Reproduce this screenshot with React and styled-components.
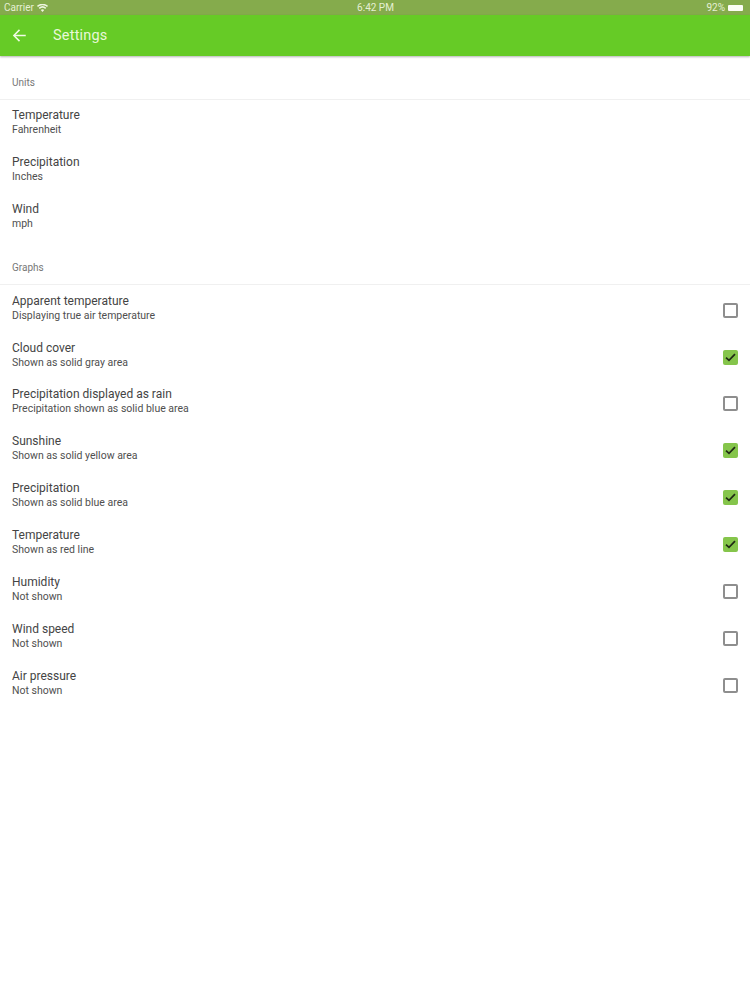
import styled, { createGlobalStyle } from 'styled-components';

const GlobalStyle = createGlobalStyle`
  html, body {
    margin: 0;
    padding: 0;
    background: #fff;
    font-family: Roboto, "Liberation Sans", sans-serif;
  }
`;

const Page = styled.div`
  width: 750px;
  height: 1000px;
  overflow: hidden;
  background: #fff;
`;

const StatusBar = styled.div`
  height: 15px;
  background: #85ab4c;
  color: #e6f0d4;
  font-size: 10px;
  display: grid;
  grid-template-columns: 1fr auto 1fr;
  align-items: center;
  padding: 0 7px 0 4px;
`;

const StatusLeft = styled.div`
  display: flex;
  align-items: center;
  gap: 3px;
`;

const StatusTime = styled.span`
  padding-left: 4px;
`;

const StatusRight = styled.div`
  display: flex;
  align-items: center;
  justify-content: flex-end;
  gap: 3px;
`;

const Battery = styled.span`
  display: block;
  width: 15px;
  height: 6px;
  background: #fbfdf5;
  border-radius: 1px;
`;

const AppBar = styled.header`
  height: 41px;
  background: #66cb26;
  color: #e9f8d8;
  display: flex;
  align-items: center;
  padding-left: 12px;
  box-shadow: 0 1px 2px rgba(0, 0, 0, 0.3);
`;

const BackButton = styled.svg`
  width: 15px;
  height: 15px;
  margin-right: 26px;
`;

const Title = styled.h1`
  margin: 0;
  font-size: 14.5px;
  font-weight: 400;
  letter-spacing: 0.2px;
`;

const SectionHeader = styled.div`
  height: ${props => props.$height}px;
  box-sizing: border-box;
  padding: 0 12px 11px;
  display: flex;
  align-items: flex-end;
  border-bottom: 1px solid #f0f0f0;
  color: #777;
  font-size: 10px;
`;

const List = styled.div`
  padding-top: ${props => props.$top}px;
`;

const Row = styled.div`
  height: 46.875px;
  box-sizing: border-box;
  padding: 0 12px;
  display: flex;
  align-items: flex-start;
  justify-content: space-between;
`;

const RowText = styled.div`
  display: flex;
  flex-direction: column;
`;

const RowTitle = styled.span`
  font-size: 12px;
  line-height: 15px;
  color: #444;
`;

const RowSub = styled.span`
  font-size: 10.5px;
  line-height: 14px;
  color: #4f4f4f;
`;

const Check = styled.span`
  width: 15px;
  height: 15px;
  box-sizing: border-box;
  margin-top: 9px;
  border-radius: 2px;
  border: ${props => (props.$on ? 'none' : '2px solid #8e8e8e')};
  background: ${props => (props.$on ? '#85c54b' : '#fff')};
  display: flex;
  align-items: center;
  justify-content: center;
`;

const units = [
  ['Temperature', 'Fahrenheit'],
  ['Precipitation', 'Inches'],
  ['Wind', 'mph'],
];

const graphs = [
  ['Apparent temperature', 'Displaying true air temperature', false],
  ['Cloud cover', 'Shown as solid gray area', true],
  ['Precipitation displayed as rain', 'Precipitation shown as solid blue area', false],
  ['Sunshine', 'Shown as solid yellow area', true],
  ['Precipitation', 'Shown as solid blue area', true],
  ['Temperature', 'Shown as red line', true],
  ['Humidity', 'Not shown', false],
  ['Wind speed', 'Not shown', false],
  ['Air pressure', 'Not shown', false],
];

const App = () => (
  <>
    <GlobalStyle />
    <Page>
      <StatusBar>
        <StatusLeft>
          <span>Carrier</span>
          <svg width="11" height="8" viewBox="0 0 22 16" fill="#eef5e0">
            <path d="M11 16 7.6 12.2a5 5 0 0 1 6.8 0L11 16Z" />
            <path d="M5.6 10 3.4 7.6a11.4 11.4 0 0 1 15.2 0L16.4 10a8.2 8.2 0 0 0-10.8 0Z" />
            <path d="M1.8 5.8 0 3.6a16.6 16.6 0 0 1 22 0l-1.8 2.2a13.8 13.8 0 0 0-18.4 0Z" />
          </svg>
        </StatusLeft>
        <StatusTime>6:42 PM</StatusTime>
        <StatusRight>
          <span>92%</span>
          <Battery />
        </StatusRight>
      </StatusBar>
      <AppBar>
        <BackButton viewBox="0 0 24 24" fill="none" stroke="#f2fbe6" strokeWidth="2.4">
          <path d="M22 12H3" />
          <path d="M12 3l-9 9 9 9" />
        </BackButton>
        <Title>Settings</Title>
      </AppBar>
      <SectionHeader $height={44}>Units</SectionHeader>
      <List $top={8}>
        {units.map(([title, sub]) => (
          <Row key={title}>
            <RowText>
              <RowTitle>{title}</RowTitle>
              <RowSub>{sub}</RowSub>
            </RowText>
          </Row>
        ))}
      </List>
      <SectionHeader $height={36}>Graphs</SectionHeader>
      <List $top={9}>
        {graphs.map(([title, sub, on]) => (
          <Row key={title}>
            <RowText>
              <RowTitle>{title}</RowTitle>
              <RowSub>{sub}</RowSub>
            </RowText>
            <Check $on={on}>
              {on && (
                <svg width="11" height="9" viewBox="0 0 11 9" fill="none" stroke="#1f2a14" strokeWidth="1.7">
                  <path d="M1 4.6 4 7.4 10 1.2" />
                </svg>
              )}
            </Check>
          </Row>
        ))}
      </List>
    </Page>
  </>
);

export default App;
